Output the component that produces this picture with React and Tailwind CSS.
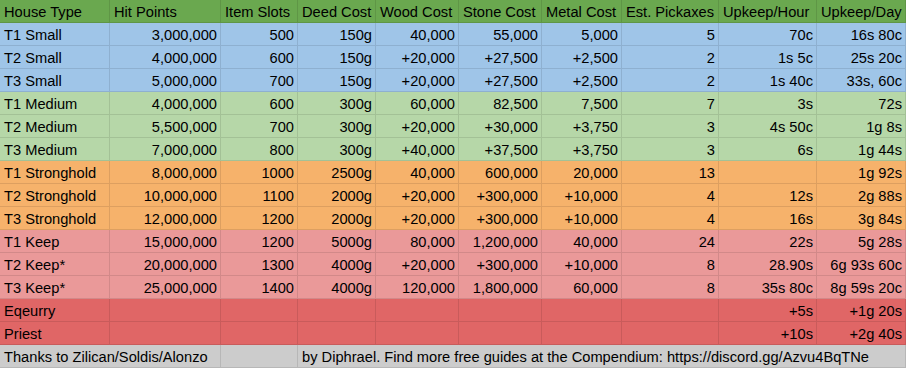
import React from "react";

const headers = ["House Type","Hit Points","Item Slots","Deed Cost","Wood Cost","Stone Cost","Metal Cost","Est. Pickaxes","Upkeep/Hour","Upkeep/Day"];

const rows = [
  ["bg-[#9fc5e8]", ["T1 Small","3,000,000","500","150g","40,000","55,000","5,000","5","70c","16s 80c"]],
  ["bg-[#9fc5e8]", ["T2 Small","4,000,000","600","150g","+20,000","+27,500","+2,500","2","1s 5c","25s 20c"]],
  ["bg-[#9fc5e8]", ["T3 Small","5,000,000","700","150g","+20,000","+27,500","+2,500","2","1s 40c","33s, 60c"]],
  ["bg-[#b6d7a8]", ["T1 Medium","4,000,000","600","300g","60,000","82,500","7,500","7","3s","72s"]],
  ["bg-[#b6d7a8]", ["T2 Medium","5,500,000","700","300g","+20,000","+30,000","+3,750","3","4s 50c","1g 8s"]],
  ["bg-[#b6d7a8]", ["T3 Medium","7,000,000","800","300g","+40,000","+37,500","+3,750","3","6s","1g 44s"]],
  ["bg-[#f6b26b]", ["T1 Stronghold","8,000,000","1000","2500g","40,000","600,000","20,000","13","","1g 92s"]],
  ["bg-[#f6b26b]", ["T2 Stronghold","10,000,000","1100","2000g","+20,000","+300,000","+10,000","4","12s","2g 88s"]],
  ["bg-[#f6b26b]", ["T3 Stronghold","12,000,000","1200","2000g","+20,000","+300,000","+10,000","4","16s","3g 84s"]],
  ["bg-[#ea9999]", ["T1 Keep","15,000,000","1200","5000g","80,000","1,200,000","40,000","24","22s","5g 28s"]],
  ["bg-[#ea9999]", ["T2 Keep*","20,000,000","1300","4000g","+20,000","+300,000","+10,000","8","28.90s","6g 93s 60c"]],
  ["bg-[#ea9999]", ["T3 Keep*","25,000,000","1400","4000g","120,000","1,800,000","60,000","8","35s 80c","8g 59s 20c"]],
  ["bg-[#e06666]", ["Eqeurry","","","","","","","","+5s","+1g 20s"]],
  ["bg-[#e06666]", ["Priest","","","","","","","","+10s","+2g 40s"]],
];

const cellBase = "h-[23px] border-r border-b border-black/10 flex items-end pb-[2px] leading-[16px] whitespace-nowrap overflow-hidden";

export default function App() {
  return (
    <div className="w-[906px] h-[368px] overflow-hidden bg-white text-black text-[14.67px]" style={{ fontFamily: '"Liberation Sans", Arial, sans-serif' }}>
      <div className="grid grid-cols-[110px_111px_77px_78px_83px_83px_80px_97px_98px_89px]">
        {headers.map((h, i) => (
          <div key={"h" + i} className={`${cellBase} bg-[#6aa84f] pl-[4px]`}>{h}</div>
        ))}
        {rows.map(([bg, cells], r) =>
          cells.map((c, i) => (
            <div
              key={r + "-" + i}
              className={`${cellBase} ${bg} ${i === 0 ? "pl-[4px] justify-start" : "pr-[3px] justify-end"}`}
            >
              {c}
            </div>
          ))
        )}
        <div className={`${cellBase} bg-[#cccccc] col-span-2 pl-[4px]`}>Thanks to Zilican/Soldis/Alonzo</div>
        <div className={`${cellBase} bg-[#cccccc]`}></div>
        <div className={`${cellBase} bg-[#cccccc] col-span-7 pl-[4px]`}>by Diphrael. Find more free guides at the Compendium: https://discord.gg/Azvu4BqTNe</div>
      </div>
    </div>
  );
}
